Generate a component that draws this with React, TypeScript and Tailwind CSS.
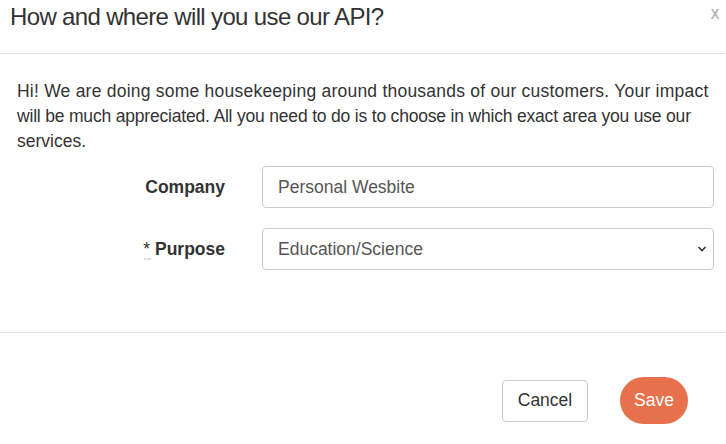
import React from 'react';

const font = { fontFamily: '"Liberation Sans", Arial, sans-serif' };

export default function App() {
  return (
    <div className="w-[726px] h-[444px] bg-white text-[#333]" style={font}>
      {/* header */}
      <div className="flex items-start justify-between h-[54px] border-b border-[#e5e5e5] pl-[10px] pr-[6px]">
        <h4 className="text-[24px] leading-[26px] pt-[4px] text-[#333] tracking-[-0.65px]">
          How and where will you use our API?
        </h4>
        <button className="inline-block text-[15px] font-bold leading-none pt-[6px] text-[#b5b5b5] scale-x-[0.85]">X</button>
      </div>

      {/* body */}
      <div className="pl-[17px] pr-[12px] pt-[25px] h-[279px] border-b border-[#e5e5e5]">
        <p className="whitespace-nowrap text-[17.5px] leading-[25px] text-[#333]">
          <span className="tracking-[0.23px]">Hi! We are doing some housekeeping around thousands of our customers. Your impact</span>
          <br />
          <span className="tracking-[-0.19px]">will be much appreciated. All you need to do is to choose in which exact area you use our</span>
          <br />
          services.
        </p>

        <div className="mt-[12px] flex flex-col gap-[20px]">
          <div className="flex items-center">
            <label className="w-[208px] shrink-0 text-right text-[17.5px] font-bold text-[#333]">Company</label>
            <input
              readOnly
              value="Personal Wesbite"
              className="ml-[37px] w-[452px] shrink-0 h-[42px] rounded-[4px] border border-[#ccc] px-[15px] text-[17.5px] text-[#555] outline-none"
            />
          </div>
          <div className="flex items-center">
            <label className="w-[208px] shrink-0 text-right text-[17.5px] font-bold text-[#333]">
              <span className="relative font-normal">
                *
                <svg className="absolute left-[1px] top-[18px]" width="8" height="4" viewBox="0 0 8 4">
                  <circle cx="1" cy="2" r="0.8" fill="#aaa" />
                  <circle cx="4" cy="2" r="0.8" fill="#aaa" />
                  <circle cx="6" cy="2" r="0.8" fill="#aaa" />
                </svg>
              </span>{' '}
              Purpose
            </label>
            <div className="ml-[37px] shrink-0 relative w-[452px] h-[42px] rounded-[4px] border border-[#ccc] flex items-center px-[15px]">
              <span className="text-[17.5px] text-[#555]">Education/Science</span>
              <svg className="absolute right-[6px] top-[16px]" width="10" height="8" viewBox="0 0 10 8">
                <path d="M1.5 2 L5 5.5 L8.5 2" fill="none" stroke="#333" strokeWidth="1.6" />
              </svg>
            </div>
          </div>
        </div>
      </div>

      {/* footer */}
      <div className="flex items-center justify-end gap-[32px] pr-[38px] pt-[44px]">
        <button className="w-[86px] h-[42px] rounded-[4px] border border-[#ccc] bg-white text-[17.5px] text-[#333]">
          Cancel
        </button>
        <button className="w-[68px] h-[47px] rounded-full bg-[#e8714d] text-[17.5px] text-white">
          Save
        </button>
      </div>
    </div>
  );
}
